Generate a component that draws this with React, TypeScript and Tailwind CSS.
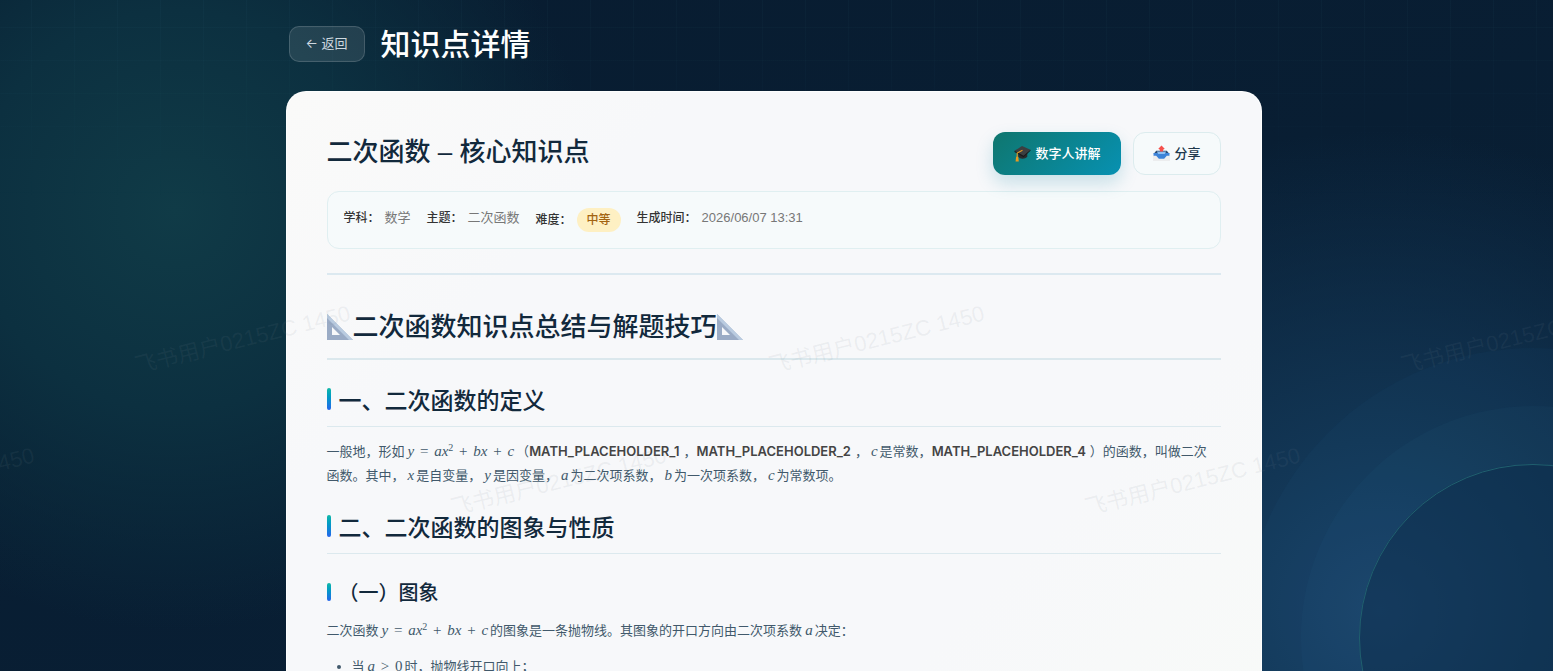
import { type ReactNode } from 'react';

interface MetaItem {
    label: string;
    value: string;
    badge?: boolean;
}

interface Mark {
    id: number;
    position: string;
}

const metaItems: MetaItem[] = [
    { label: '学科：', value: '数学' },
    { label: '主题：', value: '二次函数' },
    { label: '难度：', value: '中等', badge: true },
    { label: '生成时间：', value: '2026/06/07 13:31' },
];

const marks: Mark[] = [
    { id: 1, position: 'left-[132px] top-[326px]' },
    { id: 2, position: 'left-[766px] top-[326px]' },
    { id: 3, position: 'left-[1398px] top-[326px]' },
    { id: 4, position: 'left-[-184px] top-[468px]' },
    { id: 5, position: 'left-[448px] top-[468px]' },
    { id: 6, position: 'left-[1082px] top-[468px]' },
];

function GraduationCap() {
    return (
        <svg viewBox="0 0 32 32" className="w-[17px] h-[17px]" aria-hidden="true">
            <path d="M8 13v9c3 5 13 5 17 0v-9z" fill="#292b2d" />
            <path d="M1 11 15 2l16 7-13 13z" fill="#3c3e40" />
            <path d="M1 11 18 20 31 9v2L18 23 1 13z" fill="#18191a" />
            <path d="M16 10 6 15v9" fill="none" stroke="#e69b24" strokeWidth="2" />
            <path d="M4 22h4l1 9H3z" fill="#e99a20" />
        </svg>
    );
}

function OutboxTray() {
    return (
        <svg viewBox="0 0 32 32" className="w-[17px] h-[17px]" aria-hidden="true">
            <path d="M6 12h20l5 9v9H1v-9z" fill="#dfe2e6" />
            <path d="M6 11h20l5 6H1z" fill="#28496f" />
            <path d="M1 18h30v12H1z" fill="#ededee" />
            <path d="M1 15h30v5h-5l-5 6H11l-5-6H1z" fill="#3c83d8" />
            <path d="M7 12h18l-3 5H10z" fill="#8fc0f2" />
            <path d="m16 1 6 6-3 2v3h-6V9l-3-2z" fill="#f5504c" />
        </svg>
    );
}

function SetSquare() {
    return (
        <svg viewBox="0 0 26 26" className="w-[26px] h-[26px]" aria-hidden="true">
            <path d="M0 0v26h26zM5 13l8 8H5z" fill="#9aabc5" fillRule="evenodd" />
            <path d="M0 0 26 26h-4L0 4z" fill="#b9cbe0" />
        </svg>
    );
}

function M({ children }: { children: ReactNode }) {
    return <i className="pl-[3px] pr-0.5 text-[15px] leading-none font-['Liberation_Serif',serif]">{children}</i>;
}

function Op({ children }: { children: ReactNode }) {
    return <span className="mx-0.5 not-italic">{children}</span>;
}

function Quadratic() {
    return (
        <M>
            y <Op>=</Op> ax<sup className="text-[10px] not-italic">2</sup> <Op>+</Op> bx <Op>+</Op> c
        </M>
    );
}

function Key({ children }: { children: ReactNode }) {
    return <strong className="pr-1 font-semibold text-[#444]">{children}</strong>;
}

function Bar({ small }: { small?: boolean }) {
    return <span className={`w-1 rounded-sm bg-linear-to-b from-[#14b8a6] to-[#2563eb] ${small ? 'h-[18px] mb-0.5' : 'h-[22px] mb-1'}`} />;
}

function SectionTitle({ children }: { children: ReactNode }) {
    return (
        <h3 className="flex items-center gap-2 h-[51px] border-b border-[#dce9ee] text-[23px] font-medium text-[#12293c]">
            <Bar />
            {children}
        </h3>
    );
}

function Backdrop() {
    return (
        <div className="absolute inset-0 -z-10 overflow-hidden bg-[radial-gradient(circle_at_175px_210px,#103b47_0,#0c3040_200px,transparent_420px),radial-gradient(circle_at_1380px_610px,#1b4268_0,#123655_170px,transparent_480px),linear-gradient(160deg,#081c30,#092036)]">
            <div className="h-52 bg-[linear-gradient(to_right,rgba(120,200,220,0.03)_1px,transparent_1px),linear-gradient(to_bottom,rgba(120,200,220,0.03)_1px,transparent_1px)] bg-[size:43px_33px] bg-[position:31px_-6px] mask-b-from-0%" />
            <div className="absolute -right-[154px] top-[464px] size-[348px] rounded-full border border-[#20606f] bg-[#0e3152]/50 shadow-[0_0_0_58px_rgba(60,140,170,0.05),0_0_0_116px_rgba(40,110,180,0.05)]" />
        </div>
    );
}

export default function App() {
    return (
        <div className="relative isolate h-screen overflow-hidden pr-1.5 bg-[#081d31] text-[13px] text-[#41596b] font-['Inter','Noto_Sans_CJK_SC',sans-serif]">
            <Backdrop />

            <div className="mx-auto max-w-[976px]">
                <header className="flex items-center gap-4 h-[91px] px-[3px] pb-[3px]">
                    <button className="h-9 px-4 rounded-[10px] border border-white/15 bg-white/10 text-[#cfd9e0]">
                        ← 返回
                    </button>
                    <h1 className="text-[30px] font-medium text-white">知识点详情</h1>
                </header>

                <main className="px-10 pt-10 pb-10 rounded-[20px] border border-white/80 bg-[linear-gradient(135deg,#fafaf9,#f7f8fa_25%,#f7f8fa_75%,#f8faf8)]">
                    <div className="flex items-start justify-between">
                        <h2 className="text-[26px] leading-10 font-medium text-[#12293c] font-['Liberation_Sans','Noto_Sans_CJK_SC',sans-serif]">
                            二次函数 – 核心知识点
                        </h2>
                        <div className="flex gap-3">
                            <button className="flex items-center gap-1 h-[43px] px-[21px] rounded-xl bg-linear-135 from-[#0f766e] to-[#0891b2] font-medium text-white shadow-[0_8px_18px_rgba(8,130,160,0.2)]">
                                <GraduationCap /> 数字人讲解
                            </button>
                            <button className="flex items-center gap-1 h-[43px] px-[19px] rounded-xl border border-[#dcecee] bg-[#f6fafb] font-medium text-[#20384c]">
                                <OutboxTray /> 分享
                            </button>
                        </div>
                    </div>

                    <dl className="flex items-start gap-4 h-[58px] mt-4 px-4 pt-4 rounded-xl border border-[#e0eff1] bg-[#f6fafb] font-['Liberation_Sans','Noto_Sans_CJK_SC',sans-serif]">
                        {metaItems.map(item => (
                            <div key={item.label} className="flex items-center gap-[5px] leading-5">
                                <dt className="text-xs font-medium text-[#333]">{item.label}</dt>
                                <dd className={item.badge ? 'px-[10px] leading-6 rounded-full bg-[#fef0c3] text-xs font-medium text-[#a36411]' : 'text-[#777]'}>
                                    {item.value}
                                </dd>
                            </div>
                        ))}
                    </dl>

                    <hr className="mt-6 border-t-2 border-[#dce9f0]" />

                    <article>
                        <h2 className="flex items-center h-[85px] pt-5 border-b-2 border-[#dbe8ed] text-[26px] font-medium text-[#12293c]">
                            <SetSquare />
                            二次函数知识点总结与解题技巧
                            <SetSquare />
                        </h2>

                        <div className="pt-4">
                            <SectionTitle>一、二次函数的定义</SectionTitle>
                            <p className="mt-3 pr-2 leading-6">
                                一般地，形如<Quadratic />（<Key>MATH_PLACEHOLDER_1</Key>，<Key>MATH_PLACEHOLDER_2</Key>，<M>c</M>是常数，<Key>MATH_PLACEHOLDER_4</Key>）的函数，叫做二次函数。其中，<M>x</M>是自变量，<M>y</M>是因变量，<M>a</M>为二次项系数，<M>b</M>为一次项系数，<M>c</M>为常数项。
                            </p>
                        </div>

                        <div className="pt-4">
                            <SectionTitle>二、二次函数的图象与性质</SectionTitle>
                            <h4 className="flex items-center gap-2 mt-6 leading-[30px] text-[20px] font-medium text-[#12293c]">
                                <Bar small />
                                （一）图象
                            </h4>
                            <p className="mt-2.5 pr-2 leading-6">
                                二次函数<Quadratic />的图象是一条抛物线。其图象的开口方向由二次项系数<M>a</M>决定：
                            </p>
                            <ul className="mt-3 pl-[25px] list-disc leading-6">
                                <li>
                                    当<M>a <Op>&gt;</Op> <span className="not-italic">0</span></M>时，抛物线开口向上；
                                </li>
                            </ul>
                        </div>
                    </article>
                </main>
            </div>

            <div aria-hidden="true" className="pointer-events-none font-['Liberation_Sans','Noto_Sans_CJK_SC',sans-serif]">
                {marks.map(mark => (
                    <span key={mark.id} className={`absolute -rotate-[14deg] whitespace-nowrap text-[22px] leading-7 text-[#788896]/10 ${mark.position}`}>
                        飞书用户0215ZC 1450
                    </span>
                ))}
            </div>
        </div>
    );
}
